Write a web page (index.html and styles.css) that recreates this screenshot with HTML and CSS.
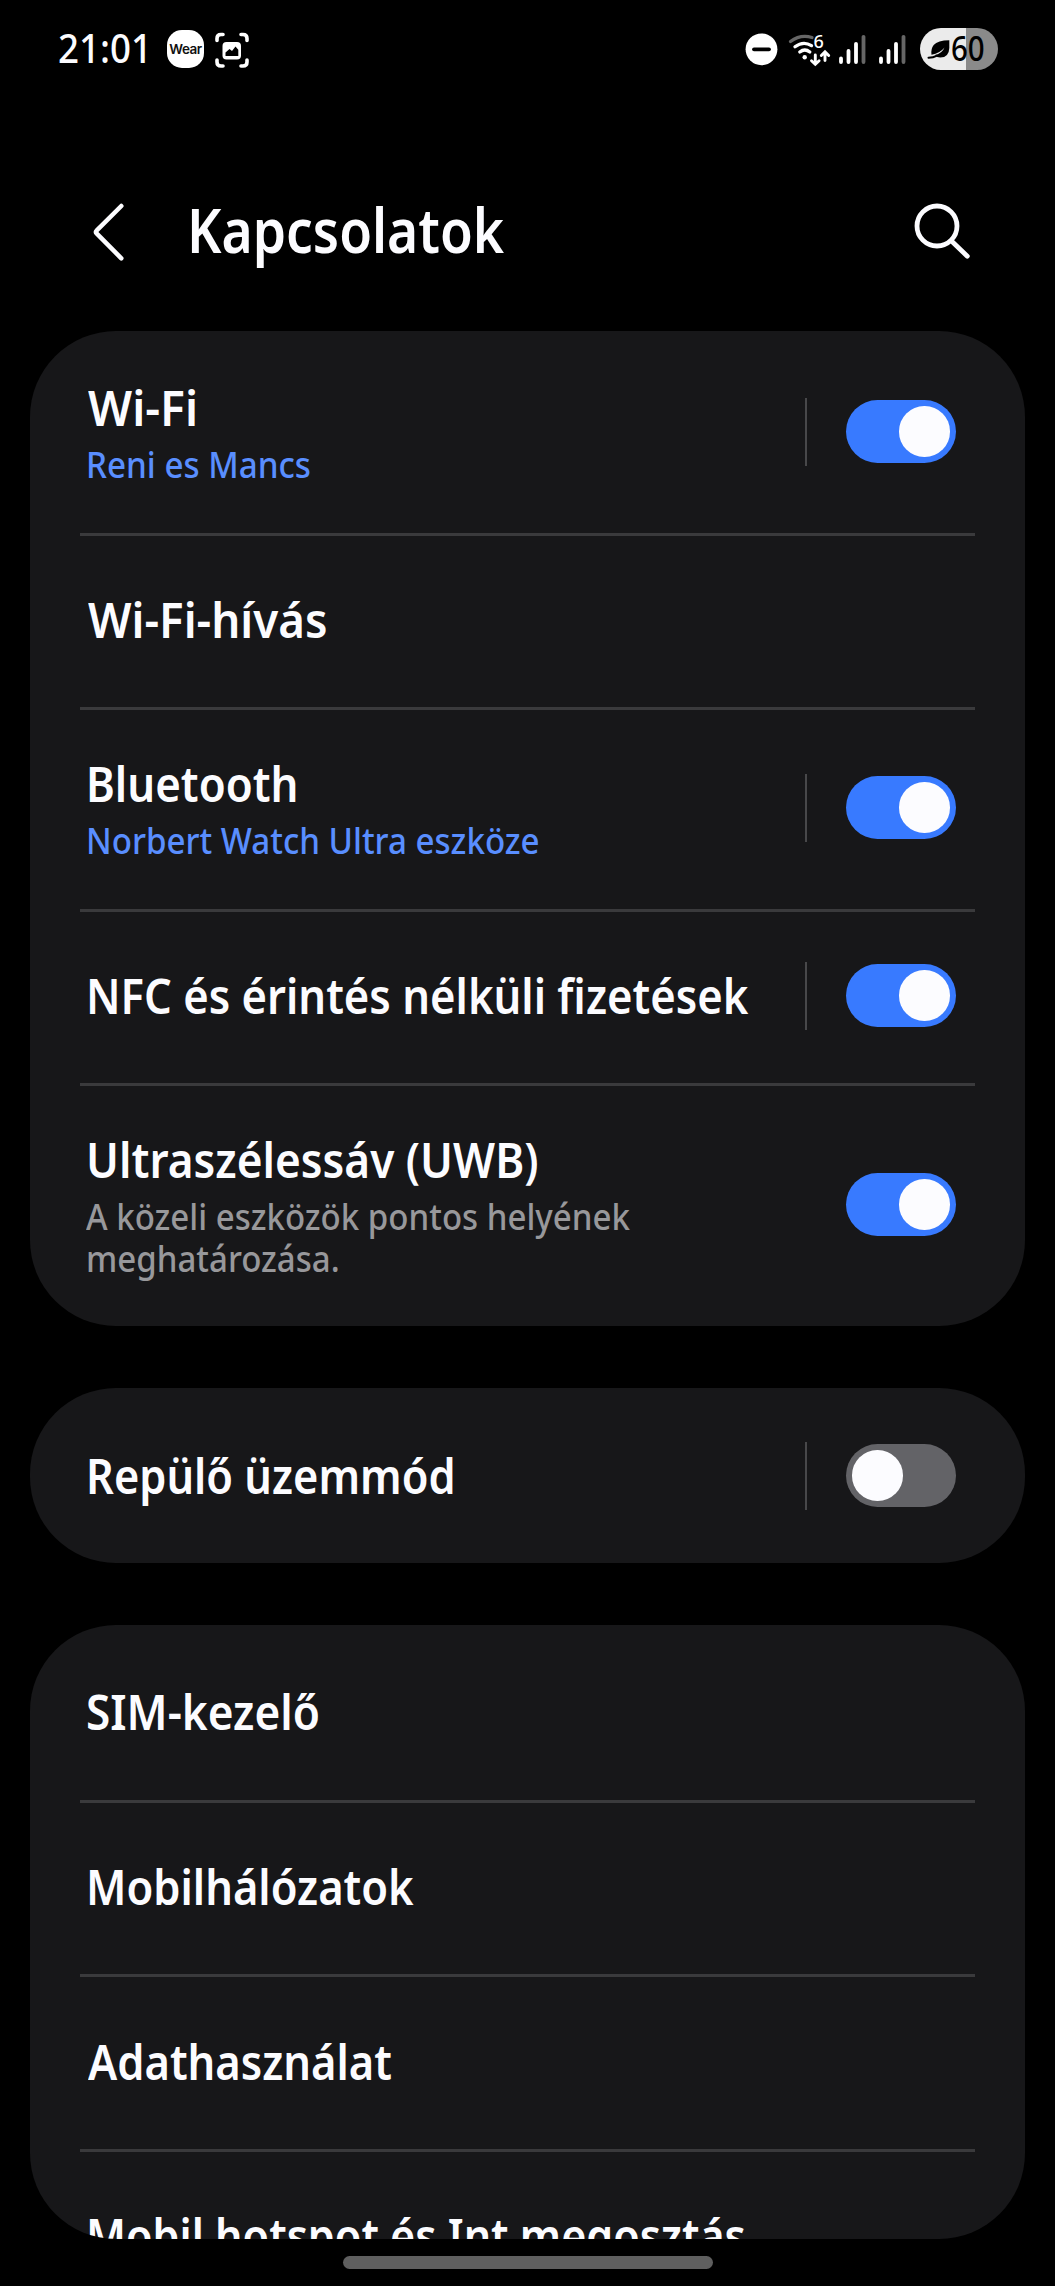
FILE: index.html
```html
<!DOCTYPE html>
<html lang="hu">
<head>
<meta charset="utf-8">
<title>Kapcsolatok</title>
<link rel="stylesheet" href="styles.css">
</head>
<body>
<div class="screen">
  <div class="status">
    <span class="clock fit" style="--fit:.918">21:01</span>
    <span class="wear"><span class="wear-text">Wear</span></span>
    <svg class="capture" width="36" height="36" viewBox="214 32 36 36" fill="none" stroke="#fff" stroke-width="3.6" stroke-linecap="round">
      <path d="M217 40.500V38.500q0-4 4-4h2M241 34.500h2q4 0 4 4v2M247 60v2q0 4-4 4h-2M223 66h-2q-4 0-4-4v-2"/>
      <rect x="222.500" y="42" width="18.500" height="17.500" rx="4" fill="#fff" stroke="none"/>
      <path d="M225.500 56v-3.500l4-3.500 2.500 2 3.500-4.500 2.800 3.200V56z" fill="#000" stroke="none"/>
    </svg>
    <svg class="dnd" width="33" height="33" viewBox="745 33 33 33"><circle cx="761.500" cy="49.300" r="15.900" fill="#fff"/><path d="M754 49.300h15" stroke="#000" stroke-width="3.800" stroke-linecap="round"/></svg>
    <svg class="wifi" width="42" height="36" viewBox="789 32 42 36" fill="none" stroke="#fff" stroke-width="3.300" stroke-linecap="round">
      <path d="M790.500 41.500q10-7.500 21.500-4" stroke="#666"/>
      <path d="M795 46.800q8.200-6.300 16.500-1.200M799.800 52q5-4 10 0"/>
      <circle cx="804.700" cy="57.300" r="2.200" fill="#fff" stroke="none"/>
      <path d="M815.300 55v8M811.500 60.700l3.800 3.600 3.800-3.600M825 60.500v-8M821.300 55.500l3.700-3.700 3.700 3.700" stroke-width="2.900"/>
      <text class="wifi-gen" x="813.500" y="47.800">6</text>
    </svg>
    <svg class="signal s1" width="28" height="32" viewBox="838 34 28 32"><g id="bars" stroke="#fff" stroke-width="3.800" stroke-linecap="round"><path d="M841 58.500V62M848.500 51V62M856 43.800V62"/><path d="M863.500 36.800V62" stroke="#666"/></g></svg>
    <svg class="signal s2" width="28" height="32" viewBox="838 34 28 32"><use href="#bars"/></svg>
    <span class="battery">
      <svg width="23" height="20" viewBox="927 38 23 20"><path d="M949.300 39.300v7.700q-.3 9.500-9 9.500-3.800 0-5.300-2.500 7-1.500 9.500-7.500-4.500 5.800-13 7.200-.8-6 2.200-9.700 4-4.700 15.600-4.700z" fill="#000"/><path d="M928.500 56.800q5-.3 8-2" stroke="#000" stroke-width="2" fill="none" stroke-linecap="round"/></svg>
      <span class="fit level" style="--fit:.88">60</span>
    </span>
  </div>

  <header class="header">
    <svg class="back" width="32" height="60" viewBox="92 202 32 60"><path d="M121.300 206L96.800 230.300q-1.700 1.700 0 3.400L121.300 258.300" fill="none" stroke="#fcfcff" stroke-width="4.500" stroke-linecap="round"/></svg>
    <h1 class="title fit" style="--fit:.88">Kapcsolatok</h1>
    <svg class="search" width="57" height="57" viewBox="914 202 57 57" fill="none" stroke="#fcfcff" stroke-linecap="round"><circle cx="937" cy="226" r="20" stroke-width="4.800"/><path d="M952 241.500L967.300 256.200" stroke-width="4.800"/></svg>
  </header>

  <main class="list">
    <section class="card">
      <div class="row two">
        <div class="text"><div class="label flush fit" style="--fit:.936">Wi-Fi</div><div class="sub link fit" style="--fit:.897">Reni es Mancs</div></div>
        <i class="sep"></i><span class="toggle on"></span>
      </div>
      <div class="row one"><div class="text"><div class="label flush fit" style="--fit:.923">Wi-Fi-hívás</div></div></div>
      <div class="row two">
        <div class="text"><div class="label fit" style="--fit:.885">Bluetooth</div><div class="sub link fit" style="--fit:.895">Norbert Watch Ultra eszköze</div></div>
        <i class="sep"></i><span class="toggle on"></span>
      </div>
      <div class="row one">
        <div class="text"><div class="label fit" style="--fit:.881">NFC és érintés nélküli fizetések</div></div>
        <i class="sep"></i><span class="toggle on"></span>
      </div>
      <div class="row three">
        <div class="text"><div class="label fit" style="--fit:.892">Ultraszélessáv (UWB)</div><div class="sub fit" style="--fit:.893">A közeli eszközök pontos helyének<br>meghatározása.</div></div>
        <span class="toggle on"></span>
      </div>
    </section>

    <section class="card">
      <div class="row one">
        <div class="text"><div class="label fit" style="--fit:.876">Repülő üzemmód</div></div>
        <i class="sep"></i><span class="toggle"></span>
      </div>
    </section>

    <section class="card last">
      <div class="row one"><div class="text"><div class="label fit" style="--fit:.892">SIM-kezelő</div></div></div>
      <div class="row one"><div class="text"><div class="label fit" style="--fit:.879">Mobilhálózatok</div></div></div>
      <div class="row one"><div class="text"><div class="label flush fit" style="--fit:.879">Adathasználat</div></div></div>
      <div class="row one"><div class="text"><div class="label fit" style="--fit:.87">Mobil hotspot és Int megosztás</div></div></div>
    </section>
  </main>

  <footer class="nav"><span class="handle"></span></footer>
</div>
</body>
</html>
```
FILE: styles.css
```css
* { box-sizing: border-box; }

body {
  margin: 0;
  background: #000;
  color: #fcfcff;
  font-family: "Noto Sans", sans-serif;
}

.screen {
  width: 1055px;
  height: 2286px;
  display: flex;
  flex-direction: column;
  overflow: hidden;
}

/* narrows the face horizontally without changing its height */
.fit {
  display: block;
  transform: scaleX(var(--fit));
  transform-origin: 0 50%;
  white-space: nowrap;
}

/* status bar */
.status {
  height: 100px;
  padding: 0 57px 2px 58px;
  display: flex;
  align-items: center;
  flex: none;
}
.clock { width: 109px; margin-top: -2px; font-size: 40px; font-weight: 500; line-height: 56px; }
.wear {
  width: 37px;
  height: 38px;
  border-radius: 15px;
  background: #fff;
  display: flex;
  align-items: center;
  justify-content: center;
}
.wear-text { font: 600 13.5px/20px Inter, sans-serif; letter-spacing: -0.5px; color: #111; }
.capture { margin: 2px 0 0 10px; }
.dnd { margin-left: auto; }
.wifi { margin: 2px 0 0 11px; overflow: visible; }
.wifi-gen { font: 500 18px "Noto Sans", sans-serif; fill: #fff; stroke: none; }
.signal { margin-top: 1px; }
.s1 { margin-left: 7px; }
.s2 { margin-left: 12px; }
.battery {
  width: 78px;
  height: 42px;
  margin-left: 14px;
  padding-left: 7px;
  border-radius: 21px;
  background: linear-gradient(90deg, #ebebeb 46px, #8a8a8a 46px);
  color: #000;
  display: flex;
  align-items: center;
}
.level { width: 36px; margin: -2px 0 0 1px; font-size: 33.5px; line-height: 42px; font-weight: 500; }

/* title bar */
.header {
  height: 231px;
  padding: 0 84px 0 92px;
  display: flex;
  align-items: flex-start;
  flex: none;
}
.back { margin-top: 102px; }
.title { margin: 90px auto 0 63px; font-size: 60.6px; font-weight: 600; line-height: 80px; }
.search { margin-top: 102px; }

/* cards */
.list {
  height: 1908px;
  padding: 0 30.500px 0 30px;
  display: flex;
  flex-direction: column;
  gap: 61.700px;
  overflow: hidden;
  flex: none;
}
.card { background: #171719; border-radius: 86px; flex: none; }
.card.last { flex: 1 1 0; min-height: 0; overflow: hidden; }

.row {
  position: relative;
  padding: 0 69px 0 56px;
  display: flex;
  align-items: center;
}
.row.one { height: 174.700px; }
.row.two { height: 201.300px; }
.row.three { height: 243.500px; }
.row + .row::before {
  content: "";
  position: absolute;
  left: 50px;
  right: 49.500px;
  top: 0.500px;
  height: 3px;
  background: #3a3a3c;
}
.text { flex: 1; min-width: 0; }
.two .text, .three .text { padding-bottom: 6px; }
.label { font-size: 49.5px; font-weight: 600; line-height: 71px; }
.label.flush { margin-left: 1.500px; }
.sub { font-size: 37px; font-weight: 500; line-height: 42px; color: #98989b; }
.sub.link { color: #598eff; }

.sep { width: 2px; height: 68px; margin-right: 39.500px; background: #48484a; flex: none; }
.toggle {
  width: 109.500px;
  height: 63px;
  padding: 0 6px;
  border-radius: 32px;
  background: #636367;
  display: flex;
  align-items: center;
  flex: none;
}
.toggle::after { content: ""; width: 50.500px; height: 50.500px; border-radius: 50%; background: #fcfcff; }
.toggle.on { background: #387aff; justify-content: flex-end; }

/* gesture bar */
.nav { flex: 1; display: flex; justify-content: center; padding-top: 17px; }
.handle { width: 370px; height: 13px; border-radius: 7px; background: #5f5f5f; }
```
